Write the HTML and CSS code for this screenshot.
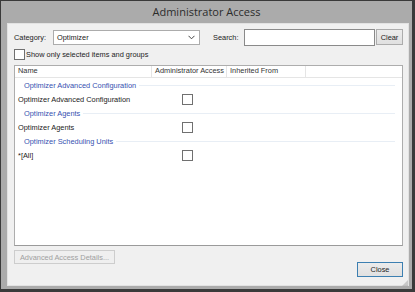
FILE: index.html
```html
<!DOCTYPE html>
<html>
<head>
<meta charset="utf-8">
<link rel="stylesheet" href="styles.css">
</head>
<body>
<div class="window">
  <div class="titlebar">Administrator Access</div>
  <div class="client">
    <div class="top-row">
      <span class="lbl cat-lbl">Category:</span>
      <div class="combo">
        <span>Optimizer</span>
        <svg class="chev" width="7" height="5" viewBox="0 0 7 5"><path d="M0.5 0.8 L3.5 3.8 L6.5 0.8" fill="none" stroke="#444" stroke-width="1"/></svg>
      </div>
      <span class="lbl search-lbl">Search:</span>
      <div class="search"></div>
      <div class="btn clear">Clear</div>
    </div>
    <div class="check-row">
      <span class="cb"></span><span class="lbl">Show only selected items and groups</span>
    </div>
    <div class="list">
      <div class="list-head">
        <div class="col c1">Name</div>
        <div class="col c2">Administrator Access</div>
        <div class="col c3">Inherited From</div>
      </div>
      <div class="group"><span>Optimizer Advanced Configuration</span><i></i></div>
      <div class="item"><div class="c1">Optimizer Advanced Configuration</div><div class="c2"><span class="cb"></span></div></div>
      <div class="group"><span>Optimizer Agents</span><i></i></div>
      <div class="item"><div class="c1">Optimizer Agents</div><div class="c2"><span class="cb"></span></div></div>
      <div class="group"><span>Optimizer Scheduling Units</span><i></i></div>
      <div class="item"><div class="c1">*[All]</div><div class="c2"><span class="cb"></span></div></div>
    </div>
    <div class="bottom">
      <div class="btn adv">Advanced Access Details...</div>
      <div class="btn close">Close</div>
    </div>
    <div class="grip"></div>
  </div>
</div>
</body>
</html>
```
FILE: styles.css
```css
html, body { margin: 0; padding: 0; }
body {
  width: 415px; height: 292px; overflow: hidden;
  font-family: "Liberation Sans", Arial, sans-serif;
  font-size: 7.4px; color: #222;
}
.window {
  box-sizing: border-box;
  width: 415px; height: 292px;
  background: #ababab;
  border: 1px solid #3a3a3a;
  border-right-width: 3px;
  border-bottom-width: 3px;
  display: flex; flex-direction: column;
}
.titlebar {
  height: 22px;
  line-height: 21px;
  text-align: center;
  font-family: "Open Sans", sans-serif;
  font-size: 11px;
  color: #2b2b2b;
}
.client {
  position: relative;
  flex: 1;
  margin: 0 3px 3px 6px;
  background: #f0f0f0;
  border: 1px solid #e2e2e2;
  display: flex; flex-direction: column;
  padding: 5px 5px 6px 6px;
}
.top-row { display: flex; align-items: center; height: 16px; }
.lbl { white-space: nowrap; }
.cat-lbl { width: 39px; }
.combo {
  box-sizing: border-box;
  width: 147px; height: 15px;
  background: #fff; border: 1px solid #acacac;
  display: flex; align-items: center; justify-content: space-between;
  padding: 0 4px 0 3px;
}
.search-lbl { margin-left: 13px; width: 31px; }
.search {
  box-sizing: border-box;
  width: 131px; height: 17px;
  background: #fff; border: 1px solid #8a8a8a;
}
.btn {
  box-sizing: border-box;
  background: linear-gradient(#ececec, #e0e0e0);
  border: 1px solid #acacac;
  display: flex; align-items: center; justify-content: center;
  white-space: nowrap;
}
.clear { width: 27px; height: 16px; margin-left: 1px; }
.check-row { display: flex; align-items: center; margin-top: 4px; height: 11px; }
.cb {
  box-sizing: border-box;
  display: inline-block;
  width: 11px; height: 11px;
  background: #fff; border: 1px solid #707070;
}
.check-row .cb { margin-right: 1px; }
.list {
  box-sizing: border-box;
  flex: 0 0 181px;
  margin: 5px 0 0 0;
  background: #fff;
  border: 1px solid #adadad;
  border-bottom-color: #9a9a9a;
}
.list-head {
  display: flex; height: 11px; line-height: 10px;
  border-bottom: 1px solid #e5e5e5;
  color: #333;
}
.list-head .col {
  box-sizing: border-box; padding-left: 3px;
  border-right: 1px solid #e5e5e5;
  white-space: nowrap; overflow: hidden;
}
.c1 { width: 137px; flex: none; }
.c2 { width: 75px; flex: none; }
.c3 { width: 79px; flex: none; }
.group {
  display: flex; align-items: center; height: 14px;
  padding-left: 9px; color: #3550b0;
}
.group span { white-space: nowrap; margin-right: 3px; }
.group i { flex: 1; height: 1px; background: #e8eef5; margin-right: 7px; }
.item { display: flex; align-items: center; height: 14px; }
.item .c1 { padding-left: 3px; box-sizing: border-box; white-space: nowrap; }
.item .c2 { display: flex; padding-left: 30px; box-sizing: border-box; }
.bottom { position: relative; flex: 1; display: flex; justify-content: space-between; align-items: flex-start; margin-top: 4px; }
.adv { width: 101px; height: 14px; color: #a0a0a0; background: #efefef; border-color: #cdcdcd; }
.close { width: 46px; height: 15px; margin-top: 12px; border-color: #3c7fb1; color: #1e1e1e; }
.grip {
  position: absolute; right: 0; bottom: -1px; width: 6px; height: 6px;
  background: radial-gradient(circle, #9a9a9a 0.6px, transparent 0.8px) 0 0 / 2px 2px;
  clip-path: polygon(100% 0, 100% 100%, 0 100%);
}
```
